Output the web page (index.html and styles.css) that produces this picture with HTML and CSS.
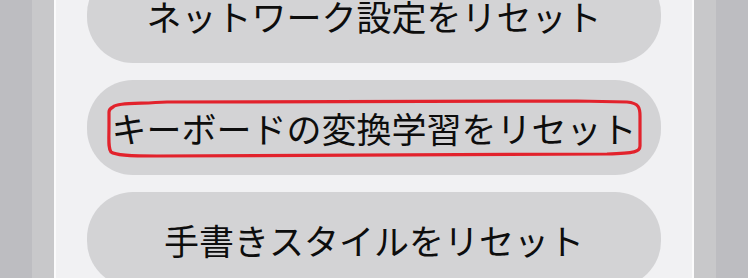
FILE: index.html
```html
<!DOCTYPE html>
<html lang="ja">
<head>
<meta charset="utf-8">
<link rel="stylesheet" href="styles.css">
</head>
<body>
<div class="screen">
  <div class="edge edge-outer"></div>
  <div class="edge edge-inner"></div>
  <div class="panel">
    <div class="btn btn-first">ネットワーク設定をリセット</div>
    <div class="btn btn-marked">キーボードの変換学習をリセット
      <svg class="mark" viewBox="0 0 576 95" width="576" height="95">
        <path d="M26 27 C30 23 45 24 80 22 L490 21 L540 22 C552 23 553 28 553 36 L553 66 C553 72 548 73 520 74 L70 76 C40 76 28 75 24 72 C21 68 22 60 22 45 L22 32 C22 29 24 28 26 27 Z" fill="none" stroke="#e2222c" stroke-width="3.2" stroke-linejoin="round"/>
      </svg>
    </div>
    <div class="btn">手書きスタイルをリセット</div>
  </div>
  <div class="edge edge-inner"></div>
  <div class="edge edge-outer"></div>
</div>
</body>
</html>
```
FILE: styles.css
```css
html, body {
  margin: 0;
  padding: 0;
  width: 748px;
  height: 278px;
  overflow: hidden;
  background: #bdbdc1;
}
.screen {
  display: flex;
  width: 748px;
  height: 278px;
}
.edge-outer {
  width: 32px;
  background: #bdbdc1;
}
.edge-inner {
  width: 22px;
  background: #c8c8ca;
}
.panel {
  flex: 1;
  background: #f1f1f3;
  border-left: 2px solid #fbfbfc;
  border-right: 2px solid #fbfbfc;
  padding: 0 31px;
  display: flex;
  flex-direction: column;
  gap: 17px;
}
.btn {
  position: relative;
  flex: none;
  height: 95px;
  border-radius: 46px;
  background: #d3d3d5;
  display: flex;
  align-items: center;
  justify-content: center;
  font-family: "Noto Sans CJK JP", "Noto Sans", sans-serif;
  font-size: 35px;
  font-weight: 400;
  color: #0d0d0d;
  letter-spacing: 0;
  white-space: nowrap;
}
.btn-first {
  margin-top: -32px;
}
.mark {
  position: absolute;
  left: 0;
  top: 0;
}
```
